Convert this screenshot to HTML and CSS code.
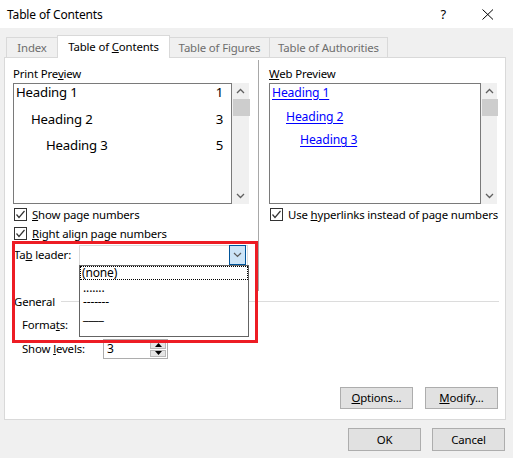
FILE: index.html
```html
<!DOCTYPE html>
<html>
<head>
<meta charset="utf-8">
<link rel="stylesheet" href="styles.css">
</head>
<body>
<div class="titlebar">
  <span class="title">Table of Contents</span>
  <span class="tb-help">?</span>
  <span class="tb-close"><svg width="12" height="11" viewBox="0 0 12 11"><path d="M0.5 0.5L11 10.5M11 0.5L0.5 10.5" stroke="#000" stroke-width="1" fill="none"/></svg></span>
</div>
<div class="tabs">
  <div class="tab t-index"><span>Index</span></div>
  <div class="tab active t-toc"><span>Table of <u>C</u>ontents</span></div>
  <div class="tab t-tof"><span>Table of Figures</span></div>
  <div class="tab t-toa"><span>Table of Authorities</span></div>
</div>
<div class="panel">
  <div class="upper">
    <div class="col-left">
      <div class="label">Print Pre<u>v</u>iew</div>
      <div class="preview">
        <div class="pv-box">
          <div class="pv-row lvl1"><span>Heading 1</span><span>1</span></div>
          <div class="pv-row lvl2"><span>Heading 2</span><span>3</span></div>
          <div class="pv-row lvl3"><span>Heading 3</span><span>5</span></div>
        </div>
        <div class="scroll">
          <svg class="arr" width="9" height="6" viewBox="0 0 9 6"><polyline points="1,5 4.5,1.5 8,5" stroke="#606060" stroke-width="1.3" fill="none"/></svg>
          <div class="thumb"></div>
          <div class="scroll-fill"></div>
          <svg class="arr" width="9" height="6" viewBox="0 0 9 6"><polyline points="1,1 4.5,4.5 8,1" stroke="#606060" stroke-width="1.3" fill="none"/></svg>
        </div>
      </div>
      <div class="check-row">
        <span class="cb"><svg width="11" height="11" viewBox="0 0 11 11"><polyline points="1.5,5.5 4,8.5 9.5,2" stroke="#333" stroke-width="1.2" fill="none"/></svg></span>
        <span><u>S</u>how page numbers</span>
      </div>
      <div class="check-row">
        <span class="cb"><svg width="11" height="11" viewBox="0 0 11 11"><polyline points="1.5,5.5 4,8.5 9.5,2" stroke="#333" stroke-width="1.2" fill="none"/></svg></span>
        <span><u>R</u>ight align page numbers</span>
      </div>
      <div class="field-row leader-row">
        <span class="field-label">Ta<u>b</u> leader:</span>
        <div class="combo">
          <div class="combo-btn"><svg width="9" height="6" viewBox="0 0 9 6"><polyline points="1,1 4.5,4.5 8,1" stroke="#5a5a5a" stroke-width="1.2" fill="none"/></svg></div>
          <div class="dropdown">
            <div class="dd-item focused">(none)</div>
            <div class="dd-item">.......</div>
            <div class="dd-item">-------</div>
            <div class="dd-item">____</div>
          </div>
        </div>
      </div>
    </div>
    <div class="col-right">
      <div class="label"><u>W</u>eb Preview</div>
      <div class="preview">
        <div class="pv-box web">
          <div class="wb-row lvl1"><a>Heading 1</a></div>
          <div class="wb-row lvl2"><a>Heading 2</a></div>
          <div class="wb-row lvl3"><a>Heading 3</a></div>
        </div>
        <div class="scroll narrow">
          <svg class="arr" width="9" height="6" viewBox="0 0 9 6"><polyline points="1,5 4.5,1.5 8,5" stroke="#606060" stroke-width="1.3" fill="none"/></svg>
          <div class="thumb"></div>
          <div class="scroll-fill"></div>
          <svg class="arr" width="9" height="6" viewBox="0 0 9 6"><polyline points="1,1 4.5,4.5 8,1" stroke="#606060" stroke-width="1.3" fill="none"/></svg>
        </div>
      </div>
      <div class="check-row">
        <span class="cb"><svg width="11" height="11" viewBox="0 0 11 11"><polyline points="1.5,5.5 4,8.5 9.5,2" stroke="#333" stroke-width="1.2" fill="none"/></svg></span>
        <span class="nowrap">Use <u>h</u>yperlinks instead of page numbers</span>
      </div>
    </div>
  </div>
  <div class="general"><span>General</span><span class="gline"></span></div>
  <div class="field-row sub"><span>Forma<u>t</u>s:</span></div>
  <div class="field-row sub levels">
    <span class="field-label sub-label">Show <u>l</u>evels:</span>
    <div class="spinner">
      <span class="spin-val">3</span>
      <div class="spin-btns">
        <div class="spin-btn"><svg width="7" height="4" viewBox="0 0 7 4"><polygon points="0,4 3.5,0 7,4" fill="#000"/></svg></div>
        <div class="spin-btn"><svg width="7" height="4" viewBox="0 0 7 4"><polygon points="0,0 3.5,4 7,0" fill="#000"/></svg></div>
      </div>
    </div>
  </div>
  <div class="panel-buttons">
    <div class="btn"><span><u>O</u>ptions...</span></div>
    <div class="btn"><span><u>M</u>odify...</span></div>
  </div>
</div>
<div class="footer">
  <div class="btn big">OK</div>
  <div class="btn big">Cancel</div>
</div>
<div class="highlight"></div>
</body>
</html>
```
FILE: styles.css
```css
* { box-sizing: border-box; }
body {
  margin: 0;
  width: 513px;
  height: 458px;
  background: #f0f0f0;
  font-family: "Noto Sans", "Open Sans", sans-serif;
  font-size: 11.4px;
  letter-spacing: -0.15px;
  color: #000;
  position: relative;
  overflow: hidden;
}
u { text-decoration: underline; text-underline-offset: 1px; }
.nowrap { white-space: nowrap; }

.titlebar {
  height: 28px;
  background: #fff;
  display: flex;
  align-items: center;
  padding: 0 19px 0 7px;
  font-size: 12px;
}
.title { flex: 1; }
.tb-help { margin-right: 36px; font-size: 13px; }
.tb-close { display: flex; }

.tabs {
  height: 29px;
  display: flex;
  align-items: flex-end;
  padding-left: 6px;
}
.tab {
  height: 20px;
  border: 1px solid #d9d9d9;
  border-bottom: none;
  margin-left: -1px;
  color: #6d6d6d;
  display: flex;
  align-items: center;
  justify-content: center;
  line-height: 16px;
  padding-top: 1px;
  white-space: nowrap;
}
.t-index { width: 52px; margin-left: 0; }
.t-toc { width: 113px; }
.t-tof { width: 101px; }
.t-toa { width: 119px; }
.tab.active {
  height: 23px;
  margin-bottom: -1px;
  background: #fff;
  color: #000;
  position: relative;
  z-index: 1;
  padding-top: 0;
}

.panel {
  margin-left: 4px;
  width: 502px;
  height: 363px;
  background: #fff;
  border: 1px solid #d9d9d9;
  padding: 2px 0 0 8px;
}
.upper {
  display: flex;
  height: 231px;
}
.col-left {
  width: 236px;
  padding-top: 6px;
}
.col-right {
  margin-left: 9px;
  border-left: 1px solid #a8a8a8;
  padding: 6px 0 0 10px;
  width: 239px;
}
.label {
  line-height: 16px;
  height: 16px;
  margin-bottom: 1px;
}
.preview {
  display: flex;
  height: 121px;
}
.pv-box {
  width: 219px;
  height: 121px;
  border: 1px solid #7a7a7a;
  padding: 1px 8px 0 2px;
}
.pv-box.web { width: 213px; padding: 3px 0 0 2px; }
.pv-row {
  display: flex;
  justify-content: space-between;
  font-size: 13.2px;
  letter-spacing: -0.2px;
  line-height: 15px;
  margin-bottom: 11.6px;
}
.pv-row.lvl2 { padding-left: 15px; }
.pv-row.lvl3 { padding-left: 30px; }
.wb-row {
  font-size: 12.2px;
  letter-spacing: -0.15px;
  line-height: 12px;
  margin-bottom: 11.7px;
}
.wb-row a { color: #0000ff; text-decoration: underline; text-underline-offset: 2px; }
.wb-row.lvl2 { padding-left: 14px; }
.wb-row.lvl3 { padding-left: 28px; }

.scroll {
  width: 17px;
  background: #f0f0f0;
  display: flex;
  flex-direction: column;
  align-items: center;
}
.scroll.narrow { width: 16px; }
.scroll .arr { margin-top: 5px; flex: none; }
.scroll .thumb {
  width: 100%;
  height: 17px;
  margin-top: 5px;
  background: #cdcdcd;
  margin-left: 1px;
}
.scroll-fill { flex: 1; }
.scroll .arr:last-child { margin: 0 0 5px; }

.check-row {
  display: flex;
  align-items: center;
  height: 19px;
  line-height: 16px;
}
.col-left .preview + .check-row,
.col-right .preview + .check-row { margin-top: 1px; }
.cb {
  width: 13px;
  height: 13px;
  border: 1px solid #333;
  background: #fff;
  margin: 0 5px 0 1px;
  display: flex;
  flex: none;
}

.field-row {
  display: flex;
  align-items: center;
  height: 20px;
  line-height: 16px;
}
.leader-row { margin-top: 2px; }
.field-label { width: 66px; padding-left: 1px; }
.combo {
  position: relative;
  width: 169px;
  height: 20px;
  border: 1px solid #dadada;
  border-bottom: none;
  background: #fff;
  display: flex;
  justify-content: flex-end;
}
.combo-btn {
  width: 17px;
  height: 20px;
  margin-top: -1px;
  margin-right: 1px;
  background: #cce4f7;
  border: 1px solid #005499;
  display: flex;
  align-items: center;
  justify-content: center;
}
.dropdown {
  position: absolute;
  top: 19px;
  left: -1px;
  width: 170px;
  height: 72px;
  border: 1px solid #646464;
  background: #fff;
  z-index: 2;
}
.dd-item {
  height: 14px;
  line-height: 14px;
  padding-left: 2px;
  border: 1px solid transparent;
  font-size: 12px;
}
.dd-item.focused { border: 1px dotted #000; line-height: 12px; padding-left: 1px; }

.general {
  display: flex;
  align-items: center;
  height: 20px;
  padding-left: 1px;
}
.gline {
  flex: 1;
  height: 1px;
  background: #dcdcdc;
  margin: 0 6px 0 6px;
}
.field-row.sub { margin-top: 4px; padding-left: 9px; }
.sub-label { width: 81px; padding-left: 0; }
.spinner {
  width: 65px;
  height: 20px;
  border: 1px solid #adadad;
  background: #fff;
  display: flex;
  justify-content: space-between;
  padding: 1px 0 1px 3px;
}
.spin-val { line-height: 16px; font-size: 12px; }
.spin-btns {
  width: 16px;
  margin-right: 1px;
  display: flex;
  flex-direction: column;
  gap: 1px;
}
.spin-btn {
  flex: 1;
  background: #e5e5e5;
  border: 1px solid #b9b9b9;
  display: flex;
  align-items: center;
  justify-content: center;
}

.panel-buttons {
  display: flex;
  justify-content: flex-end;
  gap: 12px;
  margin-top: 28px;
  padding-right: 7px;
}
.btn {
  width: 73px;
  height: 22px;
  background: #e1e1e1;
  border: 1px solid #adadad;
  display: flex;
  align-items: center;
  justify-content: center;
  line-height: 16px;
}
.footer {
  display: flex;
  justify-content: flex-end;
  gap: 11px;
  margin-top: 8px;
  padding-right: 8px;
}
.btn.big { height: 23px; }

.highlight {
  position: absolute;
  left: 12px;
  top: 241px;
  width: 246px;
  height: 102px;
  border: 3px solid #ed1c24;
  z-index: 3;
  pointer-events: none;
}
```
